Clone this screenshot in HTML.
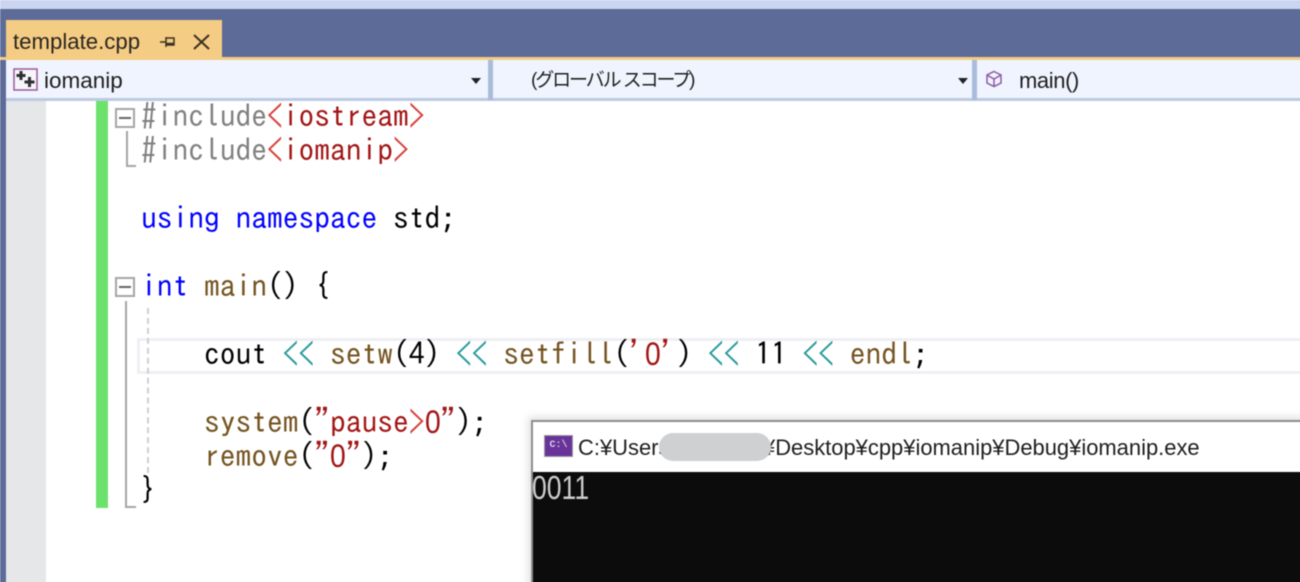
<!DOCTYPE html>
<html><head><meta charset="utf-8"><style>
html,body{margin:0;padding:0;background:#fff;width:1300px;height:582px;overflow:hidden}
#w{width:1310px;height:592px;overflow:hidden;position:relative;background:#fff;font-family:"Liberation Sans","Noto Sans CJK JP",sans-serif;filter:blur(.4px)}
.a{position:absolute}
.c{position:absolute;white-space:pre;font-family:"IPAGothic","Liberation Mono",monospace;font-size:31.5px;line-height:34px;height:34px;color:#000}
.k{color:#0000ff}.r{color:#a31515}.g{color:#808080}.f{color:#74531f}.o{color:#2b9a9a}.l{color:#d8403a}
.z{display:inline-block;width:15.75px;font-family:"Liberation Sans",sans-serif;font-size:32px;line-height:34px;transform:scaleX(.885);transform-origin:left}
.n{font-size:22.500px;line-height:26px;color:#1e1e1e;white-space:pre}
</style></head><body><div id="w">
<div class="a" style="left:0;top:0;width:1310px;height:9px;background:#ccd5f0"></div>
<div class="a" style="left:0;top:9px;width:1310px;height:48px;background:#5d6b99"></div>
<div class="a" style="left:0;top:57px;width:1310px;height:3px;background:#f5cc84"></div>
<div class="a" style="left:6px;top:20px;width:216px;height:40px;background:#f5cc84"></div>
<div class="a n" style="left:13px;top:29px;font-size:22.200px;color:#2a2620">template.cpp</div>
<svg class="a" style="left:159px;top:34px" width="18" height="16"><path d="M1 8H7M7 3V13M7 4H15V11H7M7 9.500H15" fill="none" stroke="#3a3122" stroke-width="1.500"/></svg>
<svg class="a" style="left:192px;top:33px" width="20" height="18"><path d="M2 2L17 16M17 2L2 16" fill="none" stroke="#3a3122" stroke-width="2"/></svg>

<div class="a" style="left:0;top:60px;width:6px;height:532px;background:#5d6b99"></div>
<div class="a" style="left:6px;top:60px;width:1304px;height:38px;background:#f0f4fe"></div>
<div class="a" style="left:6px;top:98px;width:1304px;height:3px;background:#bccae3"></div>
<div class="a" style="left:488px;top:60px;width:5px;height:40px;background:#a9bcdc"></div>
<div class="a" style="left:972px;top:60px;width:5px;height:40px;background:#a9bcdc"></div>
<svg class="a" style="left:13px;top:68px" width="26" height="23"><rect x="1" y="1" width="23" height="21" fill="#f5f5fa" stroke="#9b4f96" stroke-width="1.400"/><path d="M3.500 7.500H12.500M8 3V12M11.500 14H21.500M16.500 9V19" stroke="#2e2e2e" stroke-width="3" fill="none"/></svg>
<div class="a n" style="left:44px;top:68px">iomanip</div>
<div class="a" style="left:471px;top:78px;border:5px solid transparent;border-top:6px solid #222;border-bottom:0"></div>
<div class="a n" style="left:531px;top:68px;letter-spacing:-2.100px;font-size:19px">(グローバル スコープ)</div>
<div class="a" style="left:958px;top:78px;border:5px solid transparent;border-top:6px solid #222;border-bottom:0"></div>
<svg class="a" style="left:986px;top:70px" width="16" height="18"><path d="M8 1.500L15 5V13L8 16.500L1 13V5ZM1 5L8 9L15 5M8 9V16.500" fill="none" stroke="#8e5aa8" stroke-width="1.500"/></svg>
<div class="a n" style="left:1019px;top:68px;font-size:22px;letter-spacing:-.4px">main()</div>

<div class="a" style="left:6px;top:101px;width:40px;height:491px;background:#e6e7e8"></div>
<div class="a" style="left:96px;top:101px;width:12px;height:407px;background:#6ce26c"></div>
<div class="a" style="left:137px;top:338px;width:1173px;height:30px;border:3px solid #eeeef5;border-right:0"></div>

<div class="a" style="left:115px;top:108px;width:20px;height:20px;border:2px solid #a5a5a5;box-sizing:border-box"></div>
<div class="a" style="left:119px;top:117px;width:12px;height:2px;background:#666"></div>
<div class="a" style="left:126px;top:131px;width:2px;height:36px;background:#a5a5a5"></div>
<div class="a" style="left:126px;top:165px;width:10px;height:2px;background:#a5a5a5"></div>
<div class="a" style="left:115px;top:277px;width:20px;height:20px;border:2px solid #a5a5a5;box-sizing:border-box"></div>
<div class="a" style="left:119px;top:286px;width:12px;height:2px;background:#666"></div>
<div class="a" style="left:125px;top:301px;width:2px;height:206px;background:#a5a5a5"></div>
<div class="a" style="left:125px;top:506px;width:11px;height:2px;background:#a5a5a5"></div>
<div class="a" style="left:147px;top:308px;width:0;height:165px;border-left:2px dashed #cfcfcf"></div>

<div class="c g" style="left:141px;top:98px">#include<span class="l">&lt;</span><span class="r">iostream</span><span class="l">&gt;</span></div>
<div class="c g" style="left:141px;top:132px">#include<span class="l">&lt;</span><span class="r">iomanip</span><span class="l">&gt;</span></div>
<div class="c" style="left:141px;top:200px"><span class="k">using</span> <span class="k">namespace</span> std;</div>
<div class="c" style="left:141px;top:268px"><span class="k">int</span> <span class="f">main</span>() {</div>
<div class="c" style="left:204px;top:336px">cout <span class="o">&lt;&lt;</span> <span class="f">setw</span>(4) <span class="o">&lt;&lt;</span> <span class="f">setfill</span>(<span class="r">'<span class="z">0</span>'</span>) <span class="o">&lt;&lt;</span> 11 <span class="o">&lt;&lt;</span> <span class="f">endl</span>;</div>
<div class="c" style="left:204px;top:404px"><span class="f">system</span>(<span class="r">"pause<span class="l">&gt;</span><span class="z">0</span>"</span>);</div>
<div class="c" style="left:204px;top:438px"><span class="f">remove</span>(<span class="r">"<span class="z">0</span>"</span>);</div>
<div class="c" style="left:141px;top:472px">}</div>

<div class="a" style="left:531px;top:420px;width:779px;height:172px;background:#fff;border-top:2px solid #8c8c8c;border-left:2px solid #8c8c8c;box-sizing:border-box;box-shadow:-3px -3px 8px rgba(0,0,0,.12)"></div>
<div class="a" style="left:533px;top:472px;width:777px;height:120px;background:#0c0c0c"></div>
<div class="a" style="left:544px;top:435px;width:29px;height:22px;background:#68349a;border:1px solid #999;box-sizing:border-box;color:#d8cfe6;font:bold 10px/20px 'Liberation Mono',monospace;text-align:center">C:\</div>
<div class="a" style="left:578px;top:435px;font-size:21.950px;line-height:26px;color:#1e1e1e;white-space:pre">C:¥Users</div>
<div class="a" style="left:763px;top:435px;font-size:21.950px;line-height:26px;color:#1e1e1e;white-space:pre">¥Desktop¥cpp¥iomanip¥Debug¥iomanip.exe</div>
<div class="a" style="left:659px;top:433px;width:112px;height:28px;background:#cfd0d1;border-radius:14px"></div>
<div class="a" style="left:532px;top:469px;color:#ccc;font-size:33px;line-height:38px;white-space:pre;transform:scaleX(.805);transform-origin:left">0011</div>
</div></body></html>
